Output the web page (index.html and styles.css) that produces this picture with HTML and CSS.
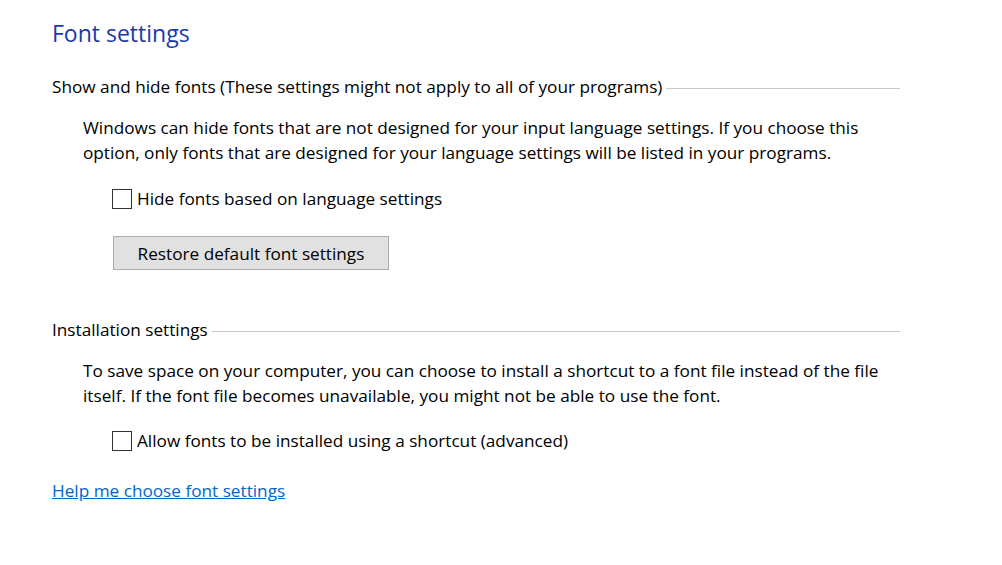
FILE: index.html
```html
<!DOCTYPE html>
<html lang="en">
<head>
    <meta charset="UTF-8">
    <title>Font settings</title>
    <link rel="stylesheet" href="styles.css">
</head>
<body>

<div class="page">
    <h1 class="title">Font settings</h1>

    <div class="group">
        <div class="group-head">
            <span>Show and hide fonts (These settings might not apply to all of your programs)</span>
            <div class="rule"></div>
        </div>
        <p class="desc">Windows can hide fonts that are not designed for your input language settings. If you choose this option, only fonts that are designed for your language settings will be listed in your programs.</p>
        <label class="check">
            <input type="checkbox" />
            <span class="box"></span>
            <span>Hide fonts based on language settings</span>
        </label>
        <button class="btn">Restore default font settings</button>
    </div>

    <div class="group second">
        <div class="group-head">
            <span>Installation settings</span>
            <div class="rule"></div>
        </div>
        <p class="desc">To save space on your computer, you can choose to install a shortcut to a font file instead of the file itself. If the font file becomes unavailable, you might not be able to use the font.</p>
        <label class="check">
            <input type="checkbox" />
            <span class="box"></span>
            <span>Allow fonts to be installed using a shortcut (advanced)</span>
        </label>
    </div>

    <a class="help" href="#">Help me choose font settings</a>
</div>

</body>
</html>
```

FILE: styles.css
```css
body {
    margin: 0;
    background: white;
    font-family: "Open Sans", "Noto Sans", sans-serif;
    font-size: 17.2px;
    color: black;
}
.page {
    width: 848px;
    padding: 18px 0 0 52px;
}
.title {
    margin: 0;
    font-size: 23px;
    font-weight: normal;
    color: #1b3aa8;
    line-height: 30px;
}
.group {
    margin-top: 28px;
}
.group.second {
    margin-top: 49px;
}
.group-head {
    display: flex;
    align-items: center;
    line-height: 22px;
}
.rule {
    flex: 1;
    height: 1px;
    margin: 2px 0 0 4px;
    background: #c8c8c8;
}
.desc {
    margin: 17px 0 0 31px;
    width: 800px;
    line-height: 25px;
}
.check {
    display: flex;
    align-items: center;
    gap: 5px;
    margin: 23px 0 0 60px;
    line-height: 22px;
}
.second .check {
    margin-top: 22px;
}
.check input {
    display: none;
}
.box {
    width: 18px;
    height: 18px;
    border: 1px solid #333;
    background: white;
}
.btn {
    display: block;
    margin: 26px 0 0 61px;
    width: 276px;
    height: 34px;
    background: #e1e1e1;
    border: 1px solid #adadad;
    font-family: inherit;
    font-size: 17.2px;
    color: black;
    padding: 0;
}
.help {
    display: inline-block;
    margin-top: 28px;
    color: #0066cc;
    text-decoration: underline;
    line-height: 22px;
}
```
